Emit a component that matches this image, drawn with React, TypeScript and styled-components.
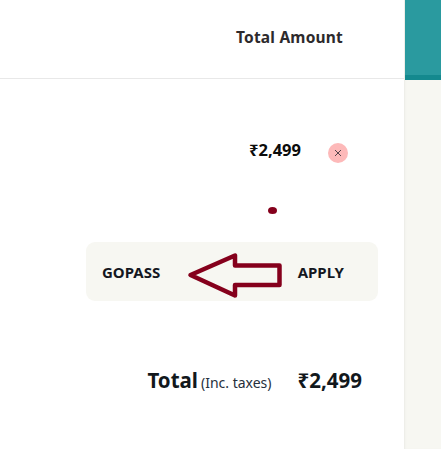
import styled, { createGlobalStyle } from 'styled-components';

const GlobalStyle = createGlobalStyle`
  html, body {
    margin: 0;
    padding: 0;
    background: #fff;
  }
  body {
    font-family: "Noto Sans", "Open Sans", sans-serif;
    color: #111;
  }
`;

const App: React.FC = () => {
  return (
    <>
      <GlobalStyle />
      <Page>
        <Main>
          <Header>
            <HeaderTitle>Total Amount</HeaderTitle>
          </Header>
          <ItemRow>
            <Price>₹2,499</Price>
            <RemoveButton>
              <svg width="8" height="8" viewBox="0 0 8 8">
                <path d="M1 1l6 6M7 1L1 7" stroke="#55444a" strokeWidth="1" />
              </svg>
            </RemoveButton>
          </ItemRow>
          <CouponBox>
            <CouponText>GOPASS</CouponText>
            <CouponText>APPLY</CouponText>
          </CouponBox>
          <TotalRow>
            <TotalLabel>Total</TotalLabel>
            <TotalNote>(Inc. taxes)</TotalNote>
            <TotalPrice>₹2,499</TotalPrice>
          </TotalRow>
          <Marks width="441" height="449" viewBox="0 0 441 449">
            <ellipse cx="272.500" cy="210.500" rx="4.500" ry="3.500" fill="#85001c" />
            <path
              d="M190.500 275 L235 255.500 V265.500 H279.500 V285 H235 V295.500 Z"
              fill="none"
              stroke="#85001c"
              strokeWidth="4.500"
              strokeLinejoin="round"
            />
          </Marks>
        </Main>
        <Side>
          <SideTop />
        </Side>
      </Page>
    </>
  );
};

export default App;

const Page = styled.div`
  display: flex;
  width: 441px;
  height: 449px;
  overflow: hidden;
`;

const Main = styled.main`
  position: relative;
  width: 404px;
  flex-shrink: 0;
`;

const Header = styled.header`
  height: 74px;
  padding: 0 61px 4px 0;
  border-bottom: 1px solid #e8e8e8;
  display: flex;
  justify-content: flex-end;
  align-items: center;
`;

const HeaderTitle = styled.div`
  font-size: 15.500px;
  font-weight: 700;
  color: #2d2a2c;
  letter-spacing: 0.2px;
`;

const ItemRow = styled.div`
  display: flex;
  justify-content: flex-end;
  align-items: flex-start;
  gap: 27px;
  margin-top: 61px;
  padding-right: 56px;
  height: 22px;
`;

const Price = styled.div`
  font-size: 16.500px;
  line-height: 20px;
  font-weight: 700;
  color: #0c0c0c;
`;

const RemoveButton = styled.div`
  width: 20px;
  height: 20px;
  margin-top: 3px;
  border-radius: 50%;
  background: #fdb9b9;
  display: flex;
  align-items: center;
  justify-content: center;
`;

const CouponBox = styled.div`
  display: flex;
  justify-content: space-between;
  align-items: center;
  margin: 80px 26px 0 86px;
  height: 59px;
  padding: 0 34px 0 16px;
  background: #f7f7f2;
  border-radius: 9px;
`;

const CouponText = styled.div`
  font-size: 15px;
  font-weight: 700;
  color: #14171f;
`;

const TotalRow = styled.div`
  display: flex;
  justify-content: flex-end;
  align-items: baseline;
  margin-top: 65px;
  padding-right: 42px;
`;

const TotalLabel = styled.div`
  font-size: 20.500px;
  font-weight: 700;
  color: #12181c;
`;

const TotalNote = styled.div`
  font-size: 14px;
  color: #26303c;
  margin-left: 3px;
`;

const TotalPrice = styled.div`
  font-size: 20.500px;
  font-weight: 700;
  color: #12181c;
  margin-left: 26px;
`;

const Marks = styled.svg`
  position: absolute;
  top: 0;
  left: 0;
  pointer-events: none;
`;

const Side = styled.aside`
  flex: 1;
  background: #f7f7f2;
  box-shadow: inset 2px 0 2px -1px #ebebe6;
`;

const SideTop = styled.div`
  height: 80px;
  margin-left: 1px;
  background: #2a9a9f;
  border-bottom: 5px solid #14898e;
  box-sizing: border-box;
`;
